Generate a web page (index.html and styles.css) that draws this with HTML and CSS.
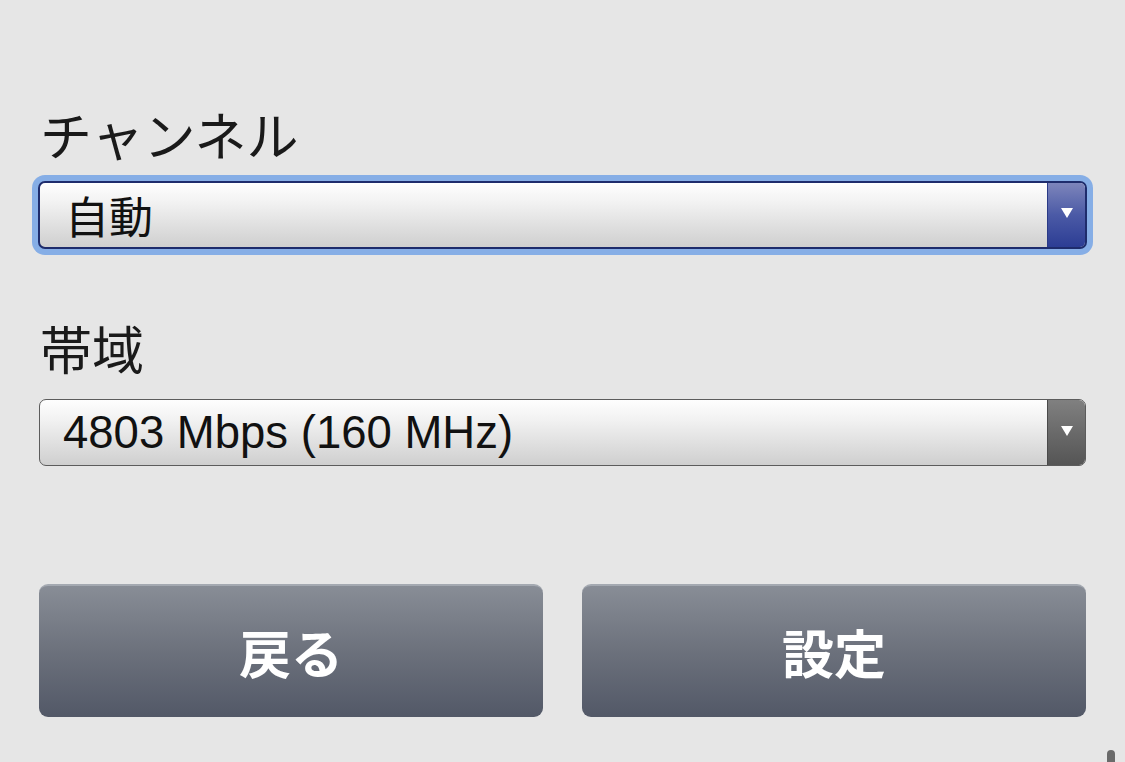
FILE: index.html
```html
<!DOCTYPE html>
<html lang="ja">
<head>
<meta charset="utf-8">
<title>チャンネル設定</title>
<link rel="stylesheet" href="styles.css">
</head>
<body>
<div class="page">
  <div class="field field-channel">
    <div class="label">チャンネル</div>
    <div class="focus-ring">
      <div class="select select-focused">
        <span class="value value-jp">自動</span>
        <span class="arrow arrow-blue"><span class="tri"></span></span>
      </div>
    </div>
  </div>
  <div class="field field-band">
    <div class="label">帯域</div>
    <div class="select select-plain">
      <span class="value value-en">4803 Mbps (160 MHz)</span>
      <span class="arrow arrow-grey"><span class="tri"></span></span>
    </div>
  </div>
  <div class="buttons">
    <button class="btn">戻る</button>
    <button class="btn">設定</button>
  </div>
</div>
<div class="scroll-thumb"></div>
</body>
</html>
```

FILE: styles.css
```css
html, body {
  margin: 0;
  padding: 0;
  background: #e6e6e6;
  height: 100%;
  overflow: hidden;
}
body {
  font-family: "Liberation Sans", "Noto Sans CJK JP", sans-serif;
  color: #111;
}
.page {
  padding: 100px 39px 0 39px;
}
.label {
  font-family: "Noto Sans CJK JP", sans-serif;
  font-size: 52px;
  line-height: 68px;
  padding-left: 1px;
  color: #1a1a1a;
}
.field-channel .label {
  margin-bottom: 7px;
}
.focus-ring {
  margin: 0 -7px;
  padding: 6px;
  border-radius: 13px;
  background: #86aee6;
}
.select {
  display: flex;
  align-items: stretch;
  box-sizing: border-box;
  border-radius: 7px;
  overflow: hidden;
  background: linear-gradient(#fefefe 0%, #f2f2f2 30%, #cfcfcf 100%);
}
.select-focused {
  height: 68px;
  border: 2px solid #1e2c6c;
}
.select-plain {
  height: 67px;
  border: 1px solid #5c5c5c;
}
.value {
  flex: 1;
  display: flex;
  align-items: center;
  color: #111;
}
.value-jp {
  font-family: "Noto Sans CJK JP", sans-serif;
  font-size: 44px;
  padding-left: 25px;
}
.value-en {
  font-size: 45.5px;
  padding-left: 23px;
}
.arrow {
  width: 37px;
  display: flex;
  align-items: center;
  justify-content: center;
}
.arrow-blue {
  border-left: 1px solid #2a3a86;
  background: linear-gradient(#7d85bb 0%, #4b5aa6 50%, #2c3d94 100%);
}
.arrow-grey {
  border-left: 1px solid #4a4a4a;
  background: linear-gradient(#808080 0%, #6a6a6a 50%, #555 100%);
}
.tri {
  width: 0;
  height: 0;
  border-left: 6px solid transparent;
  border-right: 6px solid transparent;
  border-top: 10px solid #fff;
  margin-top: -4px;
}
.field-band {
  margin-top: 59px;
}
.field-band .label {
  margin-bottom: 17px;
}
.buttons {
  margin-top: 118px;
  display: flex;
  gap: 39px;
}
.btn {
  flex: 1;
  height: 133px;
  border: none;
  border-top: 2px solid #a4a9b1;
  border-radius: 9px;
  background: linear-gradient(#888d96 0%, #6c717c 50%, #525867 100%);
  color: #fff;
  font-family: "Noto Sans CJK JP", sans-serif;
  font-weight: 700;
  font-size: 52px;
  padding: 0;
}
.scroll-thumb {
  position: absolute;
  left: 1107px;
  top: 750px;
  width: 8px;
  height: 30px;
  border-radius: 4px;
  background: #6a6a6a;
}
```
